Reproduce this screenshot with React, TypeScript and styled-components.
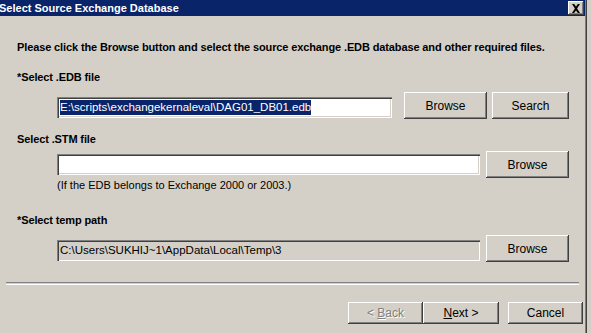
import React from 'react';
import styled, { createGlobalStyle } from 'styled-components';

const Global = createGlobalStyle`
  html, body { margin: 0; padding: 0; background: #d4d0c8; }
  body { font-family: "Liberation Sans", Arial, sans-serif; font-size: 11px; }
`;

const Screen = styled.div`
  width: 591px;
  height: 333px;
  overflow: hidden;
  background: #d4d0c8;
  display: flex;
`;

const Dialog = styled.div`
  width: 587px;
  height: 333px;
  display: flex;
  flex-direction: column;
  background: #d4d0c8;
  box-shadow: inset -1px 0 #404040, inset -2px 0 #808080;
`;

const TitleBar = styled.div`
  height: 16px;
  margin-right: 2px;
  background: #0a246a;
  display: flex;
  align-items: center;
  justify-content: space-between;
  padding-right: 1px;
`;

const Title = styled.span`
  color: #fff;
  font-weight: bold;
  font-size: 11px;
  margin-left: -1px;
  line-height: 16px;
`;

const CloseBox = styled.div`
  width: 16px;
  height: 14px;
  background: #d4d0c8;
  box-shadow: inset -1px -1px #404040, inset 1px 1px #fff, inset -2px -2px #808080;
  display: flex;
  align-items: center;
  justify-content: center;
`;

const Body = styled.div`
  display: flex;
  flex-direction: column;
  padding: 25px 0 0 17px;
`;

const Label = styled.div<{ $top: number }>`
  margin-top: ${({ $top }) => $top}px;
  font-weight: bold;
  font-size: 11px;
  line-height: 13px;
  letter-spacing: -0.12px;
  color: #000;
  white-space: nowrap;
`;

const Row = styled.div<{ $top: number }>`
  margin-top: ${({ $top }) => $top}px;
  margin-left: 40px;
  display: flex;
  align-items: flex-start;
  height: 27px;
`;

const Field = styled.div<{ $width: number; $disabled?: boolean; $off: number }>`
  width: ${({ $width }) => $width}px;
  height: 21px;
  margin-top: ${({ $off }) => $off}px;
  box-sizing: border-box;
  background: ${({ $disabled }) => ($disabled ? '#d4d0c8' : '#fff')};
  box-shadow: inset 1px 1px #808080, inset 2px 2px #404040, inset -1px -1px #fff, inset -2px -2px #d4d0c8;
  padding: 3px 3px 0 3px;
  display: flex;
  align-items: flex-start;
  font-size: 11.5px;
  line-height: 15px;
  color: #000;
  white-space: nowrap;
  overflow: hidden;
`;

const Selected = styled.span`
  background: #0a246a;
  color: #fff;
`;

const Note = styled.div`
  margin: 1px 0 0 40px;
  font-size: 11px;
  line-height: 13px;
  color: #000;
`;

const Button = styled.button<{ $w: number; $h?: number; $gap?: number }>`
  width: ${({ $w }) => $w}px;
  height: ${({ $h }) => $h ?? 27}px;
  margin-left: ${({ $gap }) => $gap ?? 0}px;
  padding: 0;
  border: none;
  background: #d4d0c8;
  box-shadow: inset -1px -1px #404040, inset 1px 1px #fff, inset -2px -2px #808080, inset 2px 2px #d4d0c8;
  font-family: "Liberation Sans", Arial, sans-serif;
  font-size: 12px;
  color: #000;
  &:disabled {
    color: #808080;
    text-shadow: 1px 1px #fff;
  }
  u { text-decoration: underline; }
`;

const Separator = styled.div`
  margin: 20px 8px 0 6px;
  height: 1px;
  border-top: 1px solid #808080;
  border-bottom: 1px solid #fff;
`;

const ButtonBar = styled.div`
  display: flex;
  margin: 17px 0 0 348px;
`;

export default function App() {
  return (
    <Screen>
      <Global />
      <Dialog>
        <TitleBar>
          <Title>Select Source Exchange Database</Title>
          <CloseBox>
            <svg width="10" height="9" viewBox="0 0 10 9">
              <path d="M1 0h2.2l1.8 2.6L6.8 0H9L6.1 4.5 9 9H6.8L5 6.4 3.2 9H1l2.9-4.5z" fill="#000" />
            </svg>
          </CloseBox>
        </TitleBar>
        <Body>
          <Label $top={0}>Please click the Browse button and select the source exchange .EDB database and other required files.</Label>
          <Label $top={17}>*Select .EDB file</Label>
          <Row $top={8}>
            <Field $width={335} $off={5}>
              <Selected>E:\scripts\exchangekernaleval\DAG01_DB01.edb</Selected>
            </Field>
            <Button $w={83} $gap={12}>Browse</Button>
            <Button $w={77} $gap={5}>Search</Button>
          </Row>
          <Label $top={14}>Select .STM file</Label>
          <Row $top={5}>
            <Field $width={423} $off={3} />
            <Button $w={83} $gap={6}>Browse</Button>
          </Row>
          <Note>(If the EDB belongs to Exchange 2000 or 2003.)</Note>
          <Label $top={22}>*Select temp path</Label>
          <Row $top={8}>
            <Field $width={423} $off={5} $disabled>C:\Users\SUKHIJ~1\AppData\Local\Temp\3</Field>
            <Button $w={83} $gap={6}>Browse</Button>
          </Row>
        </Body>
        <Separator />
        <ButtonBar>
          <Button $w={75} $h={22} disabled>
            &lt; <u>B</u>ack
          </Button>
          <Button $w={76} $h={22}>
            <u>N</u>ext &gt;
          </Button>
          <Button $w={75} $h={22} $gap={9}>Cancel</Button>
        </ButtonBar>
      </Dialog>
    </Screen>
  );
}
